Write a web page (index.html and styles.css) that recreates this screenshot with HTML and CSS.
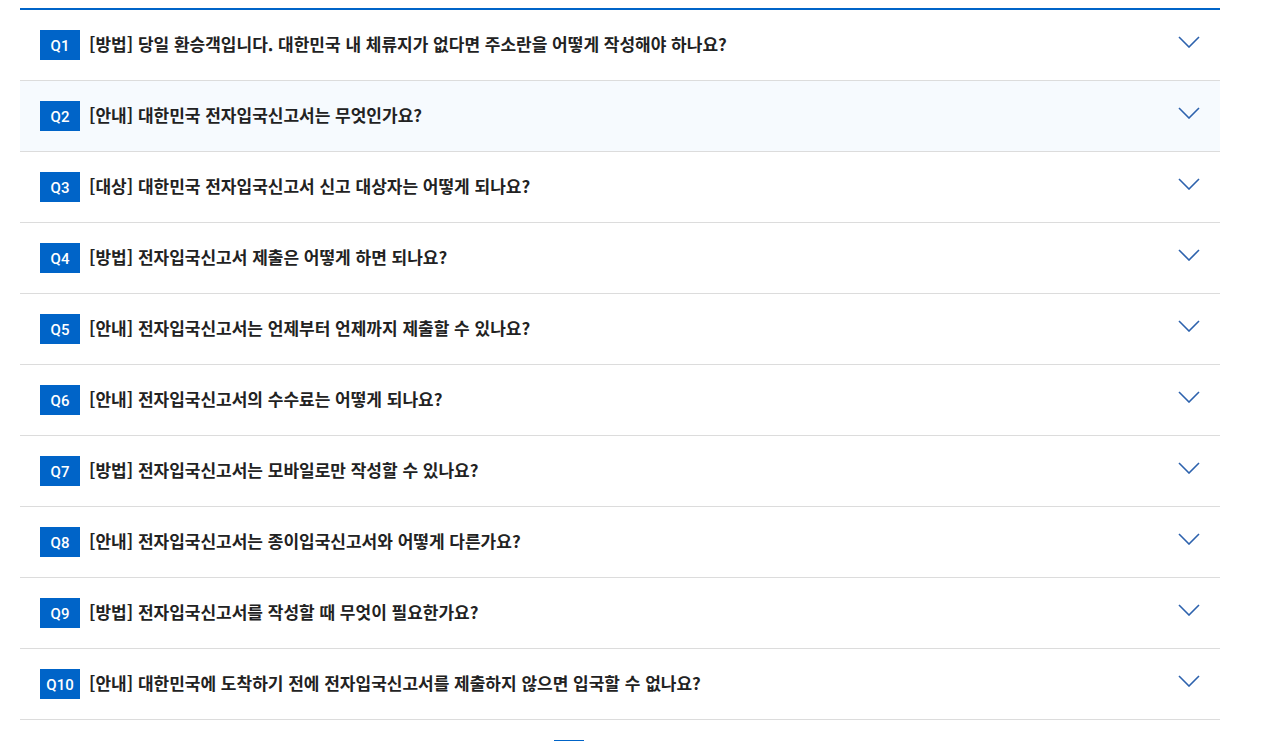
FILE: index.html
```html
<!DOCTYPE html>
<html lang="ko">
<head>
    <meta charset="utf-8">
    <title>자주 묻는 질문</title>
    <link rel="stylesheet" href="styles.css">
</head>
<body>
    <div class="faq-wrap">
        <ul class="faq-list">
            <li class="faq-item">
                <span class="faq-num">Q1</span>
                <span class="faq-title">[방법] 당일 환승객입니다. 대한민국 내 체류지가 없다면 주소란을 어떻게 작성해야 하나요?</span>
                <svg class="faq-arrow" viewBox="0 0 22 12"><path d="M1 1l10 10L21 1"/></svg>
            </li>
            <li class="faq-item hover">
                <span class="faq-num">Q2</span>
                <span class="faq-title">[안내] 대한민국 전자입국신고서는 무엇인가요?</span>
                <svg class="faq-arrow" viewBox="0 0 22 12"><path d="M1 1l10 10L21 1"/></svg>
            </li>
            <li class="faq-item">
                <span class="faq-num">Q3</span>
                <span class="faq-title">[대상] 대한민국 전자입국신고서 신고 대상자는 어떻게 되나요?</span>
                <svg class="faq-arrow" viewBox="0 0 22 12"><path d="M1 1l10 10L21 1"/></svg>
            </li>
            <li class="faq-item">
                <span class="faq-num">Q4</span>
                <span class="faq-title">[방법] 전자입국신고서 제출은 어떻게 하면 되나요?</span>
                <svg class="faq-arrow" viewBox="0 0 22 12"><path d="M1 1l10 10L21 1"/></svg>
            </li>
            <li class="faq-item">
                <span class="faq-num">Q5</span>
                <span class="faq-title">[안내] 전자입국신고서는 언제부터 언제까지 제출할 수 있나요?</span>
                <svg class="faq-arrow" viewBox="0 0 22 12"><path d="M1 1l10 10L21 1"/></svg>
            </li>
            <li class="faq-item">
                <span class="faq-num">Q6</span>
                <span class="faq-title">[안내] 전자입국신고서의 수수료는 어떻게 되나요?</span>
                <svg class="faq-arrow" viewBox="0 0 22 12"><path d="M1 1l10 10L21 1"/></svg>
            </li>
            <li class="faq-item">
                <span class="faq-num">Q7</span>
                <span class="faq-title">[방법] 전자입국신고서는 모바일로만 작성할 수 있나요?</span>
                <svg class="faq-arrow" viewBox="0 0 22 12"><path d="M1 1l10 10L21 1"/></svg>
            </li>
            <li class="faq-item">
                <span class="faq-num">Q8</span>
                <span class="faq-title">[안내] 전자입국신고서는 종이입국신고서와 어떻게 다른가요?</span>
                <svg class="faq-arrow" viewBox="0 0 22 12"><path d="M1 1l10 10L21 1"/></svg>
            </li>
            <li class="faq-item">
                <span class="faq-num">Q9</span>
                <span class="faq-title">[방법] 전자입국신고서를 작성할 때 무엇이 필요한가요?</span>
                <svg class="faq-arrow" viewBox="0 0 22 12"><path d="M1 1l10 10L21 1"/></svg>
            </li>
            <li class="faq-item">
                <span class="faq-num">Q10</span>
                <span class="faq-title">[안내] 대한민국에 도착하기 전에 전자입국신고서를 제출하지 않으면 입국할 수 없나요?</span>
                <svg class="faq-arrow" viewBox="0 0 22 12"><path d="M1 1l10 10L21 1"/></svg>
            </li>
        </ul>
        <div class="pager">
            <a class="page active"></a>
            <a class="page"></a>
            <a class="page"></a>
            <a class="page"></a>
        </div>
    </div>
</body>
</html>
```

FILE: styles.css
```css
body {
    margin: 0;
    font-family: "Noto Sans CJK KR", "Noto Sans", sans-serif;
    background-color: #fff;
    color: #222;
}
.faq-wrap {
    width: 1200px;
    padding: 8px 20px 0;
}
.faq-list {
    list-style: none;
    margin: 0;
    padding: 0;
    border-top: 2px solid #0064c8;
}
.faq-item {
    display: flex;
    align-items: center;
    height: 70px;
    padding: 0 20px;
    border-bottom: 1px solid #dcdcdc;
}
.faq-item.hover {
    background-color: #f6fafe;
}
.faq-num {
    flex: none;
    width: 40px;
    height: 30px;
    line-height: 32px;
    text-align: center;
    background-color: #0064c8;
    color: #fff;
    font-family: Roboto, "Noto Sans", sans-serif;
    font-size: 15px;
    font-weight: 500;
}
.faq-title {
    flex: 1;
    margin-left: 9px;
    padding-bottom: 3px;
    font-size: 17px;
    font-weight: 700;
}
.faq-arrow {
    flex: none;
    width: 22px;
    height: 12px;
    margin-top: -6px;
    fill: none;
    stroke: #2d62ad;
    stroke-width: 1.6;
}
.pager {
    display: flex;
    justify-content: center;
    gap: 4px;
    margin-top: 20px;
}
.page {
    width: 30px;
    height: 30px;
}
.page.active {
    background-color: #0064c8;
}
```
